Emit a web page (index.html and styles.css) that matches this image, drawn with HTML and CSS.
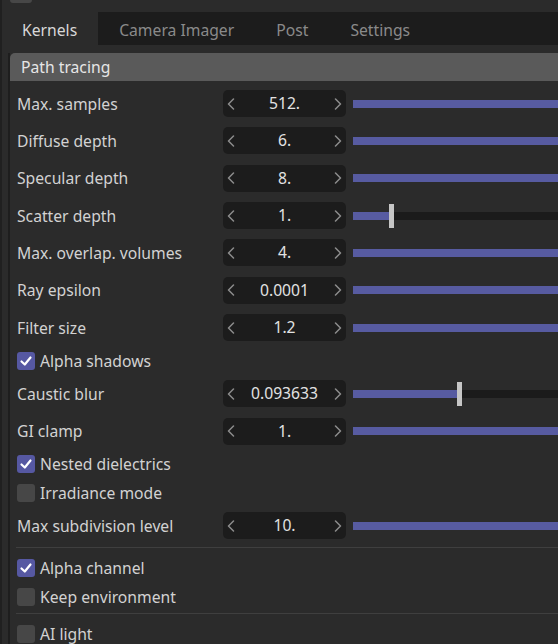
FILE: index.html
```html
<!DOCTYPE html>
<html>
<head>
<meta charset="utf-8">
<link rel="stylesheet" href="styles.css">
</head>
<body>
<div class="page">
  <div class="top">
    <div class="top-row">
      <span class="top-box"></span>
      <span class="top-text">Using global kernel setup</span>
    </div>
  </div>
  <div class="tabs">
    <div class="tab active">Kernels</div>
    <div class="tab">Camera Imager</div>
    <div class="tab">Post</div>
    <div class="tab">Settings</div>
  </div>
  <div class="panel">
    <div class="header">Path tracing</div>
    <div class="body">
      <div class="row spin"><div class="label">Max. samples</div><div class="box"><svg class="arr" viewBox="0 0 8 12"><polyline points="6.5,1 1.5,6 6.5,11"/></svg><span class="val">512.</span><svg class="arr" viewBox="0 0 8 12"><polyline points="1.5,1 6.5,6 1.5,11"/></svg></div><div class="slider"><div class="fill full"></div></div></div>
      <div class="row spin"><div class="label">Diffuse depth</div><div class="box"><svg class="arr" viewBox="0 0 8 12"><polyline points="6.5,1 1.5,6 6.5,11"/></svg><span class="val">6.</span><svg class="arr" viewBox="0 0 8 12"><polyline points="1.5,1 6.5,6 1.5,11"/></svg></div><div class="slider"><div class="fill full"></div></div></div>
      <div class="row spin"><div class="label">Specular depth</div><div class="box"><svg class="arr" viewBox="0 0 8 12"><polyline points="6.5,1 1.5,6 6.5,11"/></svg><span class="val">8.</span><svg class="arr" viewBox="0 0 8 12"><polyline points="1.5,1 6.5,6 1.5,11"/></svg></div><div class="slider"><div class="fill full"></div></div></div>
      <div class="row spin"><div class="label">Scatter depth</div><div class="box"><svg class="arr" viewBox="0 0 8 12"><polyline points="6.5,1 1.5,6 6.5,11"/></svg><span class="val">1.</span><svg class="arr" viewBox="0 0 8 12"><polyline points="1.5,1 6.5,6 1.5,11"/></svg></div><div class="slider"><div class="fill" style="width:37px"></div><div class="handle" style="left:37px"></div></div></div>
      <div class="row spin"><div class="label">Max. overlap. volumes</div><div class="box"><svg class="arr" viewBox="0 0 8 12"><polyline points="6.5,1 1.5,6 6.5,11"/></svg><span class="val">4.</span><svg class="arr" viewBox="0 0 8 12"><polyline points="1.5,1 6.5,6 1.5,11"/></svg></div><div class="slider"><div class="fill full"></div></div></div>
      <div class="row spin"><div class="label">Ray epsilon</div><div class="box"><svg class="arr" viewBox="0 0 8 12"><polyline points="6.5,1 1.5,6 6.5,11"/></svg><span class="val">0.0001</span><svg class="arr" viewBox="0 0 8 12"><polyline points="1.5,1 6.5,6 1.5,11"/></svg></div><div class="slider"><div class="fill full"></div></div></div>
      <div class="row spin"><div class="label">Filter size</div><div class="box"><svg class="arr" viewBox="0 0 8 12"><polyline points="6.5,1 1.5,6 6.5,11"/></svg><span class="val">1.2</span><svg class="arr" viewBox="0 0 8 12"><polyline points="1.5,1 6.5,6 1.5,11"/></svg></div><div class="slider"><div class="fill full"></div></div></div>
      <div class="row check c29"><span class="cb on"><svg viewBox="0 0 18 18" width="18" height="18"><polyline points="4.5,9.5 7.8,12.5 13.5,5.5" fill="none" stroke="#ffffff" stroke-width="2.2" stroke-linecap="round" stroke-linejoin="round"/></svg></span><span class="clabel">Alpha shadows</span></div>
      <div class="row spin"><div class="label">Caustic blur</div><div class="box"><svg class="arr" viewBox="0 0 8 12"><polyline points="6.5,1 1.5,6 6.5,11"/></svg><span class="val">0.093633</span><svg class="arr" viewBox="0 0 8 12"><polyline points="1.5,1 6.5,6 1.5,11"/></svg></div><div class="slider"><div class="fill" style="width:105px"></div><div class="handle" style="left:105px"></div></div></div>
      <div class="row spin"><div class="label">GI clamp</div><div class="box"><svg class="arr" viewBox="0 0 8 12"><polyline points="6.5,1 1.5,6 6.5,11"/></svg><span class="val">1.</span><svg class="arr" viewBox="0 0 8 12"><polyline points="1.5,1 6.5,6 1.5,11"/></svg></div><div class="slider"><div class="fill full"></div></div></div>
      <div class="row check c28"><span class="cb on"><svg viewBox="0 0 18 18" width="18" height="18"><polyline points="4.5,9.5 7.8,12.5 13.5,5.5" fill="none" stroke="#ffffff" stroke-width="2.2" stroke-linecap="round" stroke-linejoin="round"/></svg></span><span class="clabel">Nested dielectrics</span></div>
      <div class="row check c28"><span class="cb"></span><span class="clabel">Irradiance mode</span></div>
      <div class="row spin"><div class="label">Max subdivision level</div><div class="box"><svg class="arr" viewBox="0 0 8 12"><polyline points="6.5,1 1.5,6 6.5,11"/></svg><span class="val">10.</span><svg class="arr" viewBox="0 0 8 12"><polyline points="1.5,1 6.5,6 1.5,11"/></svg></div><div class="slider"><div class="fill full"></div></div></div>
      <div class="sep sep1"></div>
      <div class="row check c29"><span class="cb on"><svg viewBox="0 0 18 18" width="18" height="18"><polyline points="4.5,9.5 7.8,12.5 13.5,5.5" fill="none" stroke="#ffffff" stroke-width="2.2" stroke-linecap="round" stroke-linejoin="round"/></svg></span><span class="clabel">Alpha channel</span></div>
      <div class="row check c29"><span class="cb"></span><span class="clabel">Keep environment</span></div>
      <div class="sep sep2"></div>
      <div class="row check c29"><span class="cb"></span><span class="clabel">AI light</span></div>
    </div>
  </div>
</div>
</body>
</html>
```

FILE: styles.css
```css
html, body {
  margin: 0;
  padding: 0;
  background: #2b2b2b;
}
body {
  width: 558px;
  height: 644px;
  overflow: hidden;
  font-family: "Noto Sans", "Open Sans", sans-serif;
  font-size: 15.7px;
  color: #d2d2d2;
}
.page {
  border-left: 2px solid #202020;
  height: 644px;
  box-sizing: border-box;
}
.top {
  height: 12px;
  overflow: hidden;
}
.top-row {
  display: flex;
  align-items: flex-end;
  margin-top: -20px;
  height: 22px;
  line-height: 22px;
}
.top-box {
  display: inline-block;
  width: 22px;
  height: 18px;
  margin-left: 8px;
  margin-bottom: -1px;
  background: #474747;
  border-radius: 3px;
}
.top-text {
  margin-left: 10px;
  color: #c8c8c8;
  position: relative;
  top: -3px;
}
.tabs {
  display: flex;
  height: 33px;
  background: #1c1c1c;
}
.tab {
  padding: 3px 21px 0 21px;
  line-height: 30px;
  color: #8a8a8a;
}
.tab:first-child {
  padding-left: 20px;
}
.tab.active {
  background: #2b2b2b;
  color: #d8d8d8;
}
.panel {
  margin-top: 8px;
  margin-left: 6px;
  border-left: 2px solid #1e1e1e;
}
.header {
  height: 28px;
  line-height: 28px;
  background: #5a5a5a;
  border-radius: 5px 0 0 0;
  padding-left: 11px;
  color: #e6e6e6;
}
.body {
  padding-left: 7px;
  padding-top: 4px;
}
.row {
  display: flex;
  align-items: center;
}
.spin {
  height: 37.33px;
}
.c29 { height: 29px; }
.c28 { height: 28.5px; }
.label {
  width: 206px;
  flex: none;
  white-space: nowrap;
}
.box {
  width: 123px;
  height: 27px;
  flex: none;
  background: #1c1c1c;
  border-radius: 5px;
  display: flex;
  align-items: center;
  padding: 0 4px 0 4px;
  box-sizing: border-box;
  color: #e2e2e2;
}
.arr {
  width: 8px;
  height: 12px;
  flex: none;
  fill: none;
  stroke: #8c8c8c;
  stroke-width: 1.5;
  stroke-linecap: round;
  stroke-linejoin: round;
}
.val {
  flex: 1;
  text-align: center;
  line-height: 27px;
}
.slider {
  position: relative;
  flex: 1;
  height: 8px;
  margin-left: 7px;
  background: #1b1b1b;
}
.fill {
  height: 8px;
  background: #575ba1;
}
.fill.full {
  width: 100%;
}
.handle {
  position: absolute;
  top: -8px;
  width: 5px;
  height: 24px;
  margin-left: -1px;
  background: #c6c6c6;
}
.cb {
  width: 18px;
  height: 18px;
  border-radius: 3px;
  background: #474747;
  flex: none;
  display: flex;
}
.cb.on {
  background: #5658a2;
}
.clabel {
  margin-left: 5px;
}
.sep {
  height: 1px;
  background: #3f3f3f;
  margin-left: -1px;
}
.sep1 {
  margin-top: 3px;
  margin-bottom: 5px;
}
.sep2 {
  margin-top: 2px;
  margin-bottom: 5px;
}
```
